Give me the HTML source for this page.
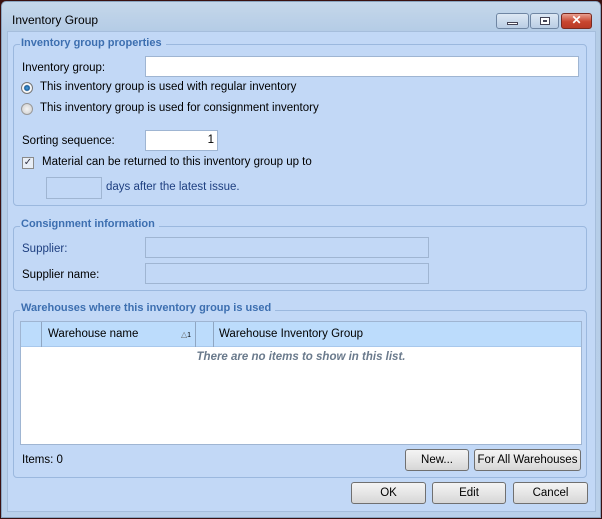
<!DOCTYPE html>
<html><head><meta charset="utf-8"><style>
*{box-sizing:border-box;margin:0;padding:0}
body{width:602px;height:519px;overflow:hidden;background:#3a1010;font-family:"Liberation Sans",sans-serif;font-size:11.5px;color:#000}
.win{position:absolute;left:1px;top:1px;width:600px;height:517px;background:linear-gradient(#c5d7ea,#b4cce6 30px,#b9d0ea);border:1px solid #8aa4c0;border-radius:5px 5px 0 0}
.a{position:absolute}
.panel{position:absolute;left:5px;top:29px;width:589px;height:481px;background:#c2d8f6;border:1px solid #a6bedc}
.c{position:absolute;left:-2px;top:-2px;width:589px;height:481px}
.grp{position:absolute;border:1px solid #9bb8de;border-radius:4px}
.gt{position:absolute;color:#3d6fb0;font-weight:bold;font-size:11px;background:#c2d8f6;padding:0 4px 0 1px}
.in{position:absolute;background:#fff;border:1px solid #9fb5d2}
.dis{position:absolute;background:#c2d8f6;border:1px solid #9fb5d2}
.btn{position:absolute;border:1px solid #707070;border-radius:3px;background:linear-gradient(#f4f4f4,#e6e6e6 50%,#d6d6d6);text-align:center;line-height:21px}
.wb{position:absolute;top:11px;height:16px;border:1px solid #6f86a3;border-radius:3px;background:linear-gradient(#dde8f4,#b9cde4)}
</style></head><body>
<div class="win">
<div class="a" style="left:10px;top:11px;font-size:12px">Inventory Group</div>
<div class="wb" style="left:494px;width:33px"><div class="a" style="left:10px;top:8px;width:11px;height:3px;background:#fff;border:1px solid #445"></div></div>
<div class="wb" style="left:528px;width:29px"><div class="a" style="left:9px;top:3px;width:10px;height:8px;border:1px solid #445;background:#fff"><div class="a" style="left:2px;top:2px;width:4px;height:2px;border:1px solid #445"></div></div></div>
<div class="wb" style="left:559px;width:31px;background:linear-gradient(#e8a090,#c8452f 55%,#b93a26);border-color:#7a2a20;color:#fff;font-weight:bold;text-align:center;line-height:13px;font-size:12px">✕</div>
<div class="panel"><div class="c">
 <div class="grp" style="left:7px;top:14px;width:574px;height:162px"></div>
 <div class="gt" style="left:14px;top:7px">Inventory group properties</div>
 <div class="a" style="left:16px;top:32px">Inventory group:</div>
 <div class="in" style="left:139px;top:26px;width:434px;height:21px"></div>
 <div class="a" style="left:15px;top:52px;width:12px;height:12px;border-radius:50%;border:1px solid #777;background:radial-gradient(#4aa3e0 0,#1a5d9a 2.5px,#fff 3.5px,#ddd)"></div>
 <div class="a" style="left:34px;top:51px">This inventory group is used with regular inventory</div>
 <div class="a" style="left:15px;top:73px;width:12px;height:12px;border-radius:50%;border:1px solid #999;background:radial-gradient(#f4f4f4,#ccc)"></div>
 <div class="a" style="left:34px;top:72px">This inventory group is used for consignment inventory</div>
 <div class="a" style="left:16px;top:105px">Sorting sequence:</div>
 <div class="in" style="left:139px;top:100px;width:73px;height:21px;text-align:right;padding:3px 3px 0 0">1</div>
 <div class="a" style="left:16px;top:127px;width:12px;height:12px;border:1px solid #8a8a8a;background:#e8eef6;font-size:10px;line-height:10px;text-align:center;color:#334">✓</div>
 <div class="a" style="left:36px;top:126px">Material can be returned to this inventory group up to</div>
 <div class="dis" style="left:40px;top:147px;width:56px;height:22px"></div>
 <div class="a" style="left:100px;top:151px;color:#1e3f80">days after the latest issue.</div>

 <div class="grp" style="left:7px;top:196px;width:574px;height:65px"></div>
 <div class="gt" style="left:14px;top:188px">Consignment information</div>
 <div class="a" style="left:16px;top:213px;color:#1e3f80">Supplier:</div>
 <div class="dis" style="left:139px;top:207px;width:284px;height:21px"></div>
 <div class="a" style="left:16px;top:239px">Supplier name:</div>
 <div class="dis" style="left:139px;top:233px;width:284px;height:21px"></div>

 <div class="grp" style="left:7px;top:280px;width:574px;height:168px"></div>
 <div class="gt" style="left:14px;top:272px">Warehouses where this inventory group is used</div>
 <div class="a" style="left:14px;top:291px;width:562px;height:124px;background:#fff;border:1px solid #9fb5d2">
  <div class="a" style="left:0;top:0;width:560px;height:25px;background:#bcdcfc;border-bottom:1px solid #a8c8ec"></div>
  <div class="a" style="left:20px;top:0;width:1px;height:25px;background:#8fa6c2"></div>
  <div class="a" style="left:174px;top:0;width:1px;height:25px;background:#8fa6c2"></div>
  <div class="a" style="left:192px;top:0;width:1px;height:25px;background:#8fa6c2"></div>
  <div class="a" style="left:27px;top:6px">Warehouse name</div>
  <div class="a" style="left:160px;top:8px;font-size:8px;color:#666">△<span style="font-size:7px;color:#000">1</span></div>
  <div class="a" style="left:198px;top:6px">Warehouse Inventory Group</div>
  <div class="a" style="left:0;top:29px;width:560px;text-align:center;font-style:italic;font-weight:bold;color:#6a7a8c">There are no items to show in this list.</div>
 </div>
 <div class="a" style="left:16px;top:424px">Items: 0</div>
 <div class="btn" style="left:399px;top:419px;width:64px;height:22px">New...</div>
 <div class="btn" style="left:468px;top:419px;width:107px;height:22px">For All Warehouses</div>
 <div class="btn" style="left:345px;top:452px;width:75px;height:22px">OK</div>
 <div class="btn" style="left:426px;top:452px;width:74px;height:22px">Edit</div>
 <div class="btn" style="left:507px;top:452px;width:75px;height:22px">Cancel</div>
</div></div>
</div>
</body></html>
